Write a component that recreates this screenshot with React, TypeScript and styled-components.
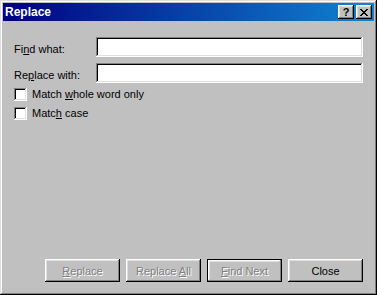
import styled, { createGlobalStyle } from "styled-components";

const raised =
  "inset -1px -1px #000, inset 1px 1px #fff, inset -2px -2px #808080, inset 2px 2px #dfdfdf";
const sunken =
  "inset -1px -1px #fff, inset 1px 1px #808080, inset -2px -2px #dfdfdf, inset 2px 2px #000";

const GlobalStyle = createGlobalStyle`
  html, body {
    margin: 0;
    padding: 0;
    background: #c0c0c0;
  }
  body {
    font-family: "Liberation Sans", Arial, sans-serif;
    font-size: 11px;
    color: #000;
  }
`;

const Window = styled.div`
  width: 377px;
  height: 295px;
  box-sizing: border-box;
  padding: 3px;
  background: #c0c0c0;
  box-shadow: inset -1px -1px #000, inset 1px 1px #dfdfdf, inset -2px -2px #808080,
    inset 2px 2px #fff;
  display: flex;
  flex-direction: column;
`;

const TitleBar = styled.div`
  height: 18px;
  flex-shrink: 0;
  display: flex;
  align-items: center;
  padding: 0 2px 0 2px;
  background: linear-gradient(to right, #000080, #1084d0);
`;

const Title = styled.span`
  flex: 1;
  color: #fff;
  font-weight: bold;
  font-size: 12px;
  line-height: 18px;
`;

const TitleButtons = styled.div`
  display: flex;
  gap: 2px;
`;

const CaptionButton = styled.button`
  width: 16px;
  height: 14px;
  padding: 0;
  border: 0;
  background: #c0c0c0;
  box-shadow: ${raised};
  display: flex;
  align-items: center;
  justify-content: center;
  font-family: "Liberation Sans", Arial, sans-serif;
  font-weight: bold;
  font-size: 11px;
  line-height: 14px;
  color: #000;
`;

const Body = styled.div`
  flex: 1;
  display: flex;
  flex-direction: column;
  padding: 16px 11px 10px 11px;
`;

const Fields = styled.div`
  display: flex;
  flex-direction: column;
  gap: 6px;
`;

const FieldRow = styled.div`
  display: flex;
  height: 20px;
`;

const FieldLabel = styled.label`
  width: 82px;
  padding-top: 6px;
  line-height: 13px;
`;

const TextInput = styled.input`
  flex: 1;
  height: 20px;
  box-sizing: border-box;
  border: 0;
  padding: 2px 3px;
  background: #fff;
  box-shadow: ${sunken};
  font: inherit;
  outline: none;
`;

const Checks = styled.div`
  margin-top: 5px;
  display: flex;
  flex-direction: column;
  gap: 6px;
`;

const CheckRow = styled.label`
  display: flex;
  align-items: center;
  gap: 5px;
  height: 13px;
  line-height: 13px;
`;

const CheckBox = styled.span`
  width: 13px;
  height: 13px;
  box-sizing: border-box;
  background: #fff;
  box-shadow: ${sunken};
`;

const ButtonRow = styled.div`
  margin-top: auto;
  display: flex;
  justify-content: flex-end;
  gap: 6px;
`;

const Button = styled.button<{ $default?: boolean }>`
  width: 75px;
  height: 23px;
  box-sizing: border-box;
  padding: 0;
  background: #c0c0c0;
  font-family: "Liberation Sans", Arial, sans-serif;
  font-size: 11px;
  color: #000;
  border: ${({ $default }) => ($default ? "1px solid #000" : "0")};
  box-shadow: ${({ $default }) =>
    $default
      ? "inset -1px -1px #808080, inset 1px 1px #fff, inset -2px -2px #c0c0c0, inset 2px 2px #dfdfdf"
      : raised};

  &:disabled {
    color: #808080;
    text-shadow: 1px 1px #fff;
  }
`;

const Key = styled.span`
  text-decoration: underline;
`;

const CloseGlyph = () => (
  <svg width="8" height="7" viewBox="0 0 8 7" shapeRendering="crispEdges">
    <path
      fill="#000"
      d="M0 0h2v1H0zM6 0h2v1H6zM1 1h2v1H1zM5 1h2v1H5zM2 2h4v1H2zM3 3h2v1H3zM2 4h4v1H2zM1 5h2v1H1zM5 5h2v1H5zM0 6h2v1H0zM6 6h2v1H6z"
    />
  </svg>
);

export default function App() {
  return (
    <>
      <GlobalStyle />
      <Window>
        <TitleBar>
          <Title>Replace</Title>
          <TitleButtons>
            <CaptionButton>?</CaptionButton>
            <CaptionButton>
              <CloseGlyph />
            </CaptionButton>
          </TitleButtons>
        </TitleBar>
        <Body>
          <Fields>
            <FieldRow>
              <FieldLabel>
                Fi<Key>n</Key>d what:
              </FieldLabel>
              <TextInput />
            </FieldRow>
            <FieldRow>
              <FieldLabel>
                Re<Key>p</Key>lace with:
              </FieldLabel>
              <TextInput />
            </FieldRow>
          </Fields>
          <Checks>
            <CheckRow>
              <CheckBox />
              <span>
                Match <Key>w</Key>hole word only
              </span>
            </CheckRow>
            <CheckRow>
              <CheckBox />
              <span>
                Matc<Key>h</Key> case
              </span>
            </CheckRow>
          </Checks>
          <ButtonRow>
            <Button disabled>
              <Key>R</Key>eplace
            </Button>
            <Button disabled>
              Replace <Key>A</Key>ll
            </Button>
            <Button disabled $default>
              <Key>F</Key>ind Next
            </Button>
            <Button>Close</Button>
          </ButtonRow>
        </Body>
      </Window>
    </>
  );
}
